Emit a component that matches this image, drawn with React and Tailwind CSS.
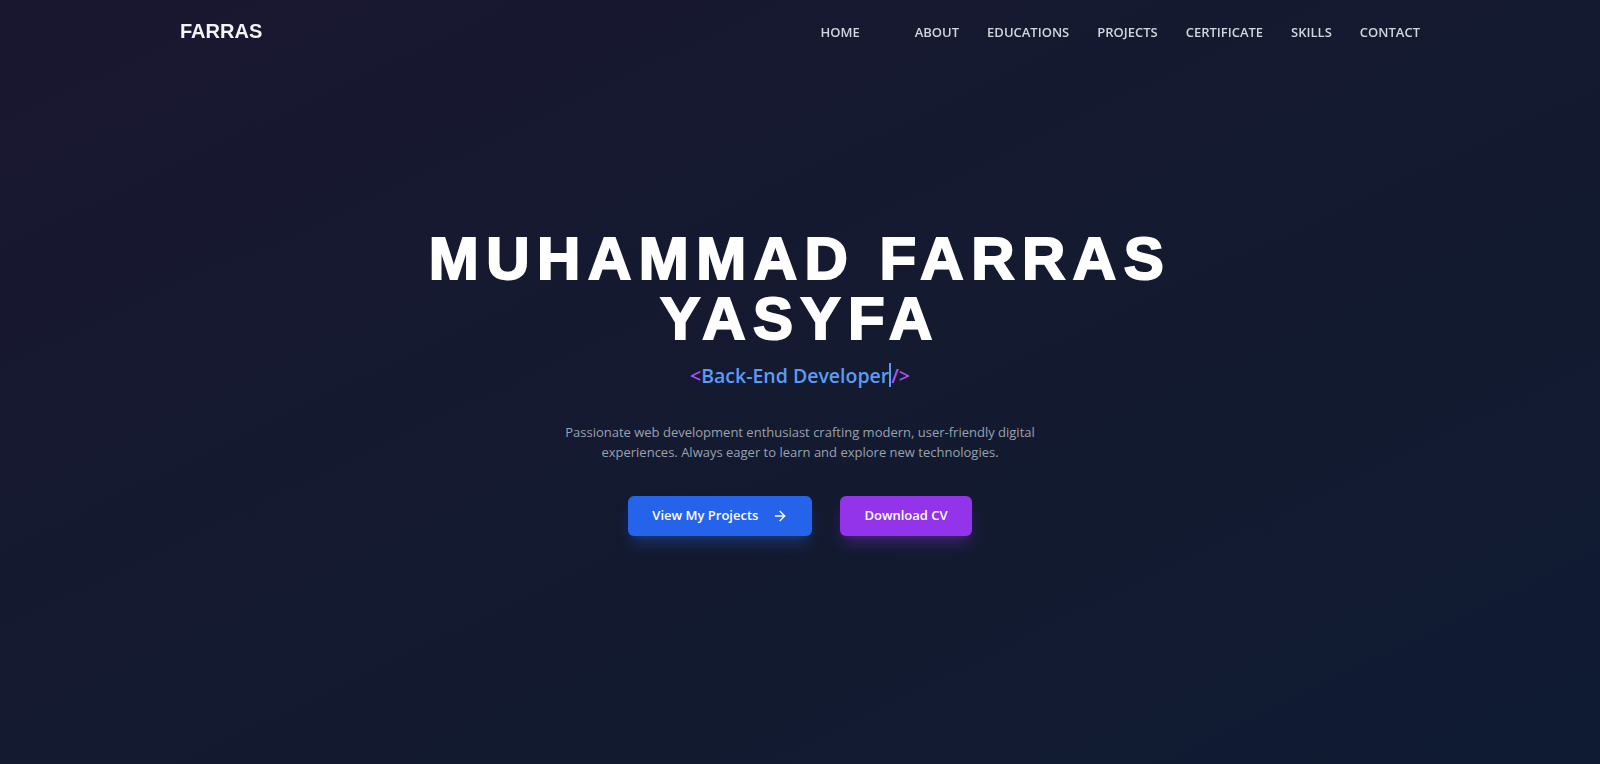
import React from 'react';
import { ArrowRight } from 'lucide-react';

const links = ['HOME', 'ABOUT', 'EDUCATIONS', 'PROJECTS', 'CERTIFICATE', 'SKILLS', 'CONTACT'];

const Navbar = () => (
  <nav className="fixed top-0 left-0 right-0 z-10">
    <div className="max-w-7xl mx-auto px-5 h-[61px] flex items-center justify-between">
      <h1 className="text-xl font-bold text-gray-100 font-['Liberation_Sans',Arial,sans-serif]">FARRAS</h1>
      <ul className="flex items-center gap-7 font-['Open_Sans',sans-serif]">
        {links.map((l, i) => (
          <li key={l} className={i === 0 ? 'mr-[27px]' : ''}>
            <a href="#" className="text-[13px] font-semibold tracking-normal text-gray-300">
              {l}
            </a>
          </li>
        ))}
      </ul>
    </div>
  </nav>
);

const Hero = () => (
  <section className="min-h-screen flex flex-col items-center justify-center text-center px-4">
    <h2 className="text-6xl leading-none font-bold text-white tracking-[0.125em] [-webkit-text-stroke:2px_white] font-['Liberation_Sans',Arial,sans-serif]">
      <span className="block">MUHAMMAD FARRAS</span>
      <span className="block">YASYFA</span>
    </h2>
    <p className="mt-[13px] text-[19.5px] leading-7 font-semibold font-['Open_Sans',sans-serif]">
      <span className="text-[#a855f7]">&lt;</span>
      <span className="text-[#5b9cf5]">Back-End Developer</span>
      <span className="inline-block w-[2px] h-6 bg-[#5b9cf5] align-middle -mt-1"></span>
      <span className="text-[#a855f7]">/&gt;</span>
    </p>
    <p className="mt-8 max-w-[470px] text-[13px] leading-5 text-gray-400 font-['Open_Sans',sans-serif]">
      Passionate web development enthusiast crafting modern, user-friendly digital experiences. Always eager to learn and explore new technologies.
    </p>
    <div className="mt-[34px] flex items-center gap-7 font-['Open_Sans',sans-serif]">
      <a href="#" className="h-10 px-6 flex items-center gap-3.5 rounded-md bg-[#2563eb] text-white text-[13px] font-semibold shadow-lg shadow-[#2563eb]/30">
        View My Projects
        <ArrowRight size={16} />
      </a>
      <a href="#" className="h-10 px-6 flex items-center rounded-md bg-[#9333ea] text-white text-[13px] font-semibold shadow-lg shadow-[#9333ea]/30">
        Download CV
      </a>
    </div>
  </section>
);

export default function App() {
  return (
    <div className="min-h-screen bg-gradient-to-br from-[#19172f] via-[#141a2f] to-[#0f1b33]">
      <Navbar />
      <Hero />
    </div>
  );
}
